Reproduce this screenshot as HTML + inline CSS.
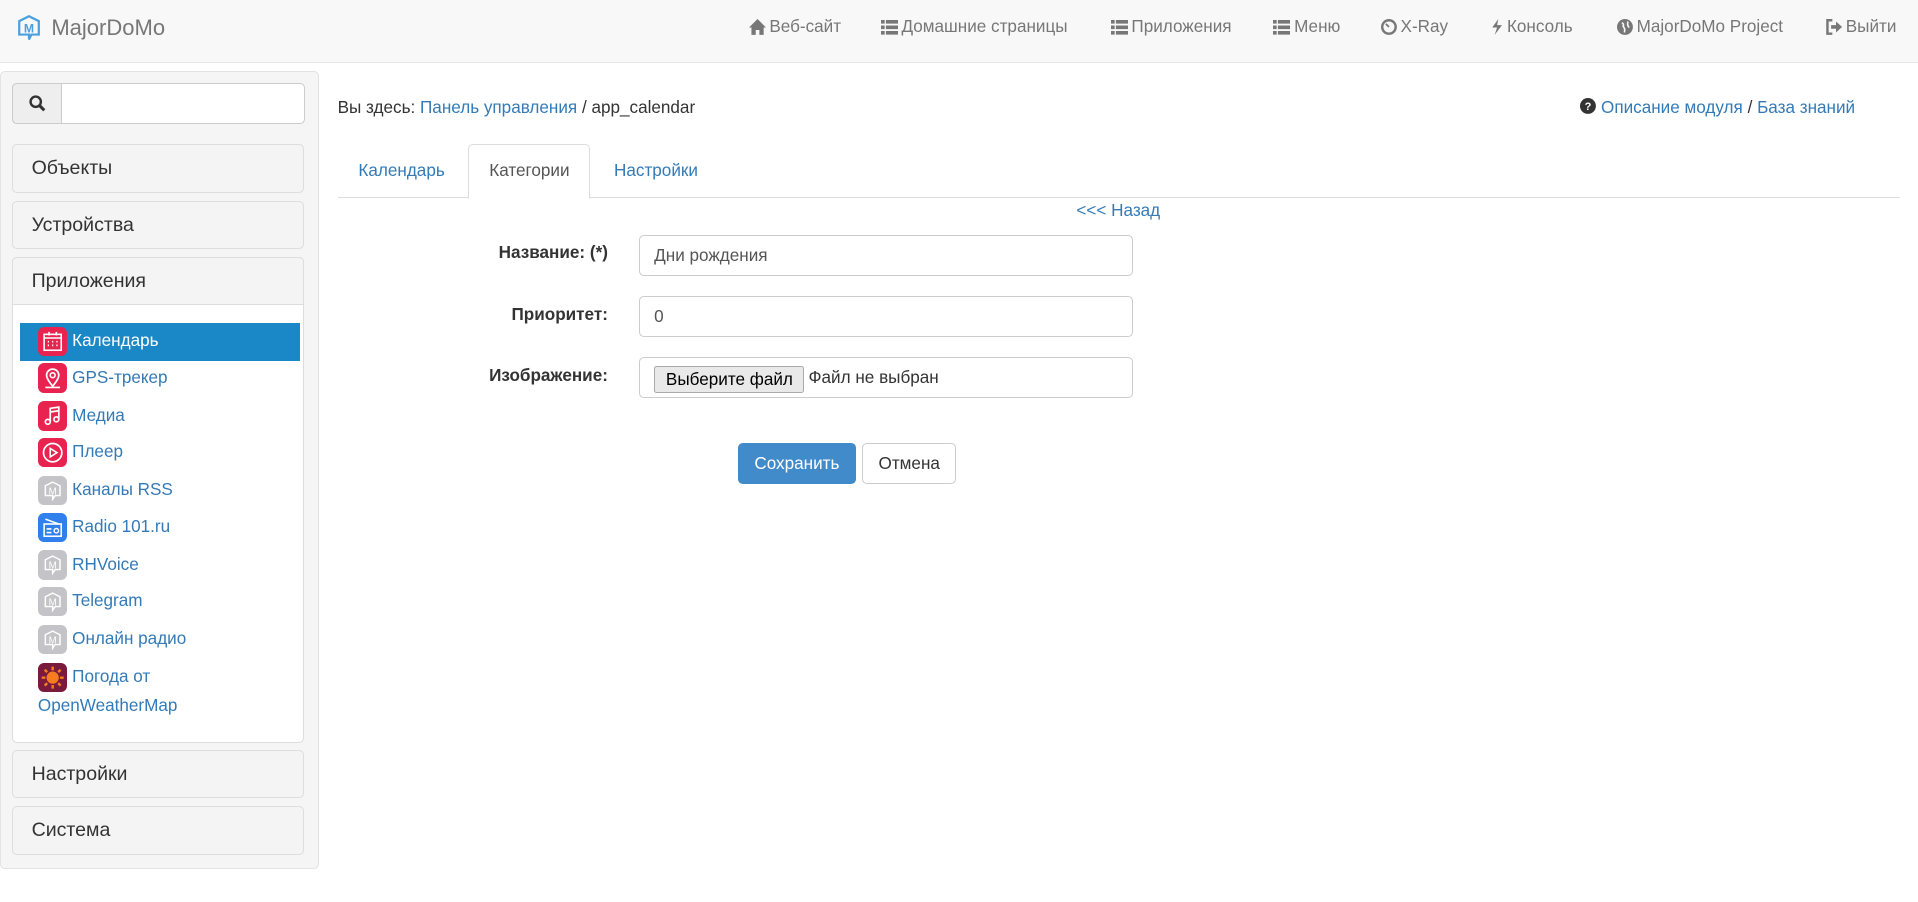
<!DOCTYPE html>
<html><head><meta charset="utf-8"><style>
html,body{margin:0;padding:0;background:#fff;overflow:hidden}
body{width:1918px;height:902px}
#w{zoom:1.2232;position:relative;width:1568px;height:737px;font-family:"Liberation Sans",Arial,sans-serif;font-size:14px;color:#333}
.a{position:absolute}
.nav{left:0;top:0;width:1568px;height:51px;background:#f8f8f8;border-bottom:1px solid #e7e7e7}
.ni{position:absolute;top:14px;color:#777;font-size:14px;white-space:nowrap}
.ni svg{vertical-align:-2px;margin-right:3px}
.well{left:0;top:58px;width:259px;height:651px;background:#f5f5f5;border:1px solid #e3e3e3;border-radius:4px}
.ph{position:absolute;left:10px;width:237px;height:38px;background:#f4f4f4;border:1px solid #ddd;border-radius:4px;font-size:16px;line-height:38px;text-indent:15px;color:#333}
.li{position:absolute;left:16px;width:229px;height:30px;line-height:30px;color:#337ab7;font-size:14px}
.li .ic{position:absolute;left:15px;top:3px;width:24px;height:24px;border-radius:5px}
.li span{position:absolute;left:43px}
.inp{position:absolute;left:522px;width:403px;height:32px;border:1px solid #ccc;border-radius:4px;background:#fff;font-size:14px;line-height:32px;text-indent:12px;color:#555}
.lbl{position:absolute;right:1071px;font-weight:bold;font-size:14px;color:#333}
a{color:#337ab7;text-decoration:none}
</style></head><body><div id="w">
<div class="a nav">
 <svg class="a" style="left:15px;top:12px" width="18" height="22" viewBox="0 0 18 22"><path d="M9 1 L17 5 V16 H11 L9 20 V16 H1 V5 Z" fill="none" stroke="#4a9fe0" stroke-width="1.8"/><text x="9" y="14.5" font-size="10" font-weight="bold" fill="#4a9fe0" text-anchor="middle" font-family="Liberation Sans">M</text></svg>
 <div class="a" style="left:42px;top:12px;font-size:18px;color:#777">MajorDoMo</div>
 <div class="ni" style="left:612px"><svg width="14" height="13" viewBox="0 0 14 13"><path d="M7 0 L14 7 H12 V13 H8.5 V9 H5.5 V13 H2 V7 H0 Z" fill="#777"/></svg>Веб-сайт</div>
 <div class="ni" style="left:720px"><svg width="14" height="12" viewBox="0 0 14 12"><path d="M0 0h3v3H0zM4 0h10v3H4zM0 4.5h3v3H0zM4 4.5h10v3H4zM0 9h3v3H0zM4 9h10v3H4z" fill="#777"/></svg>Домашние страницы</div>
 <div class="ni" style="left:908px"><svg width="14" height="12" viewBox="0 0 14 12"><path d="M0 0h3v3H0zM4 0h10v3H4zM0 4.5h3v3H0zM4 4.5h10v3H4zM0 9h3v3H0zM4 9h10v3H4z" fill="#777"/></svg>Приложения</div>
 <div class="ni" style="left:1041px"><svg width="14" height="12" viewBox="0 0 14 12"><path d="M0 0h3v3H0zM4 0h10v3H4zM0 4.5h3v3H0zM4 4.5h10v3H4zM0 9h3v3H0zM4 9h10v3H4z" fill="#777"/></svg>Меню</div>
 <div class="ni" style="left:1129px"><svg width="13" height="13" viewBox="0 0 13 13"><circle cx="6.5" cy="6.5" r="5.5" fill="none" stroke="#777" stroke-width="2"/><path d="M6.5 6.5 L4 4" stroke="#777" stroke-width="1.5"/></svg>X-Ray</div>
 <div class="ni" style="left:1219px"><svg width="10" height="13" viewBox="0 0 10 13"><path d="M6 0 L1 7 H5 L3 13 L9 5 H5 Z" fill="#777"/></svg>Консоль</div>
 <div class="ni" style="left:1322px"><svg width="13" height="13" viewBox="0 0 13 13"><circle cx="6.5" cy="6.5" r="6.5" fill="#777"/><path d="M4 3 Q6 4 5 6 Q7 8 6 11 M9 2 Q8 5 10 7" stroke="#f8f8f8" stroke-width="1.3" fill="none"/></svg>MajorDoMo Project</div>
 <div class="ni" style="left:1492px"><svg width="14" height="13" viewBox="0 0 14 13"><path d="M6 1 H2 V12 H6" fill="none" stroke="#777" stroke-width="2"/><path d="M5 5 H9 V2 L14 6.5 L9 11 V8 H5 Z" fill="#777"/></svg>Выйти</div>
</div>

<div class="a well"></div>
<div class="a" style="left:10px;top:68px;width:238px;height:32px;border:1px solid #ccc;border-radius:4px;background:#fff"></div>
<div class="a" style="left:10px;top:68px;width:39px;height:32px;border:1px solid #ccc;border-radius:4px 0 0 4px;background:#eee"><svg style="position:absolute;left:13px;top:9px" width="14" height="14" viewBox="0 0 14 14"><circle cx="5.5" cy="5.5" r="4.2" fill="none" stroke="#333" stroke-width="2"/><path d="M8.5 8.5 L12.5 12.5" stroke="#333" stroke-width="2.5"/></svg></div>
<div class="ph" style="top:118px">Объекты</div>
<div class="ph" style="top:164px">Устройства</div>
<div class="a" style="left:10px;top:210px;width:237px;height:396px;background:#fff;border:1px solid #ddd;border-radius:4px"></div>
<div class="ph" style="top:210px;border-radius:4px 4px 0 0">Приложения</div>
<div class="li" style="top:264px;height:31px;background:#1a87c7;color:#fff"><div class="ic" style="background:#e8234f"><svg width="24" height="24" viewBox="0 0 24 24"><rect x="5" y="6" width="14" height="13" fill="none" stroke="#fff" stroke-width="1.3"/><path d="M5 9H19M9 4V7M15 4V7" stroke="#fff" stroke-width="1.3"/><path d="M8 12h1M11.5 12h1M15 12h1M8 15h1M11.5 15h1M15 15h1" stroke="#fff" stroke-width="1.4"/></svg></div><span style="font-weight:normal">Календарь</span></div>
<div class="li" style="top:294px"><div class="ic" style="background:#e8234f"><svg width="24" height="24" viewBox="0 0 24 24"><path d="M12 19 C8 14 7 12 7 10 A5 5 0 0 1 17 10 C17 12 16 14 12 19Z M6 20 H18" fill="none" stroke="#fff" stroke-width="1.4"/><circle cx="12" cy="10" r="2" fill="none" stroke="#fff" stroke-width="1.3"/></svg></div><span>GPS-трекер</span></div>
<div class="li" style="top:325px"><div class="ic" style="background:#e8234f"><svg width="24" height="24" viewBox="0 0 24 24"><path d="M10 17V6L17 5V15M10 9L17 8" fill="none" stroke="#fff" stroke-width="1.4"/><circle cx="8" cy="17" r="2" fill="none" stroke="#fff" stroke-width="1.4"/><circle cx="15" cy="15" r="2" fill="none" stroke="#fff" stroke-width="1.4"/></svg></div><span>Медиа</span></div>
<div class="li" style="top:355px"><div class="ic" style="background:#e8234f"><svg width="24" height="24" viewBox="0 0 24 24"><circle cx="12" cy="12" r="7.5" fill="none" stroke="#fff" stroke-width="1.4"/><path d="M10 8.5V15.5L15.5 12Z" fill="none" stroke="#fff" stroke-width="1.3"/></svg></div><span>Плеер</span></div>
<div class="li" style="top:386px"><div class="ic" style="background:#c4c4c8"><svg width="24" height="24" viewBox="0 0 24 24"><path d="M12 5 L18 8 V16 H14 L12 19 V16 H6 V8 Z" fill="none" stroke="#fff" stroke-width="1.2"/><text x="12" y="15" font-size="8" fill="#fff" text-anchor="middle" font-family="Liberation Sans">M</text></svg></div><span>Каналы RSS</span></div>
<div class="li" style="top:416px"><div class="ic" style="background:#2f80ed"><svg width="24" height="24" viewBox="0 0 24 24"><rect x="5" y="9" width="14" height="10" fill="none" stroke="#fff" stroke-width="1.3"/><path d="M6 5 L17 9 M7 13h4M7 16h4" stroke="#fff" stroke-width="1.3"/><circle cx="15" cy="14.5" r="1.8" fill="none" stroke="#fff" stroke-width="1.2"/></svg></div><span>Radio 101.ru</span></div>
<div class="li" style="top:447px"><div class="ic" style="background:#c4c4c8"><svg width="24" height="24" viewBox="0 0 24 24"><path d="M12 5 L18 8 V16 H14 L12 19 V16 H6 V8 Z" fill="none" stroke="#fff" stroke-width="1.2"/><text x="12" y="15" font-size="8" fill="#fff" text-anchor="middle" font-family="Liberation Sans">M</text></svg></div><span>RHVoice</span></div>
<div class="li" style="top:477px"><div class="ic" style="background:#c4c4c8"><svg width="24" height="24" viewBox="0 0 24 24"><path d="M12 5 L18 8 V16 H14 L12 19 V16 H6 V8 Z" fill="none" stroke="#fff" stroke-width="1.2"/><text x="12" y="15" font-size="8" fill="#fff" text-anchor="middle" font-family="Liberation Sans">M</text></svg></div><span>Telegram</span></div>
<div class="li" style="top:508px"><div class="ic" style="background:#c4c4c8"><svg width="24" height="24" viewBox="0 0 24 24"><path d="M12 5 L18 8 V16 H14 L12 19 V16 H6 V8 Z" fill="none" stroke="#fff" stroke-width="1.2"/><text x="12" y="15" font-size="8" fill="#fff" text-anchor="middle" font-family="Liberation Sans">M</text></svg></div><span>Онлайн радио</span></div>
<div class="li" style="top:539px"><div class="ic" style="background:#7a1a3c"><svg width="24" height="24" viewBox="0 0 24 24"><circle cx="12" cy="12" r="5" fill="#f57c1f"/><path d="M12 3V6M12 18V21M3 12H6M18 12H21M5.5 5.5L7.5 7.5M16.5 16.5L18.5 18.5M5.5 18.5L7.5 16.5M16.5 7.5L18.5 5.5" stroke="#f57c1f" stroke-width="2"/></svg></div><span>Погода от</span></div>
<div class="a" style="left:31px;top:569px;color:#337ab7">OpenWeatherMap</div>
<div class="ph" style="top:613px">Настройки</div>
<div class="ph" style="top:659px">Система</div>

<div class="a" style="left:276px;top:80px">Вы здесь: <a>Панель управления</a> / app_calendar</div>
<div class="a" style="left:1292px;top:80px"><svg width="13" height="13" viewBox="0 0 13 13" style="vertical-align:-1px"><circle cx="6.5" cy="6.5" r="6.5" fill="#333"/><text x="6.5" y="10" font-size="9" font-weight="bold" fill="#fff" text-anchor="middle" font-family="Liberation Sans">?</text></svg> <a>Описание модуля</a> / <a>База знаний</a></div>

<div class="a" style="left:276px;top:161px;width:1277px;height:1px;background:#ddd"></div>
<div class="a" style="left:293px;top:132px;color:#337ab7">Календарь</div>
<div class="a" style="left:383px;top:118px;width:98px;height:43px;background:#fff;border:1px solid #ddd;border-bottom:1px solid #fff;border-radius:4px 4px 0 0"></div>
<div class="a" style="left:400px;top:132px;color:#555">Категории</div>
<div class="a" style="left:502px;top:132px;color:#337ab7">Настройки</div>
<div class="a" style="left:880px;top:164px"><a>&lt;&lt;&lt; Назад</a></div>

<div class="lbl" style="top:199px">Название: (*)</div>
<div class="inp" style="top:192px">Дни рождения</div>
<div class="lbl" style="top:249px">Приоритет:</div>
<div class="inp" style="top:242px">0</div>
<div class="lbl" style="top:299px">Изображение:</div>
<div class="inp" style="top:292px"></div>
<div class="a" style="left:535px;top:299px;width:121px;height:21px;border:1px solid #aaa;background:#e9e9e9;border-radius:2px;font-size:14px;line-height:21px;text-align:center;color:#000">Выберите файл</div>
<div class="a" style="left:661px;top:301px;color:#333">Файл не выбран</div>

<div class="a" style="left:603px;top:362px;width:97px;height:34px;background:#428bca;border-radius:4px;color:#fff;line-height:34px;text-align:center">Сохранить</div>
<div class="a" style="left:705px;top:362px;width:75px;height:32px;border:1px solid #ccc;border-radius:4px;background:#fff;color:#333;line-height:32px;text-align:center">Отмена</div>
</div></body></html>
